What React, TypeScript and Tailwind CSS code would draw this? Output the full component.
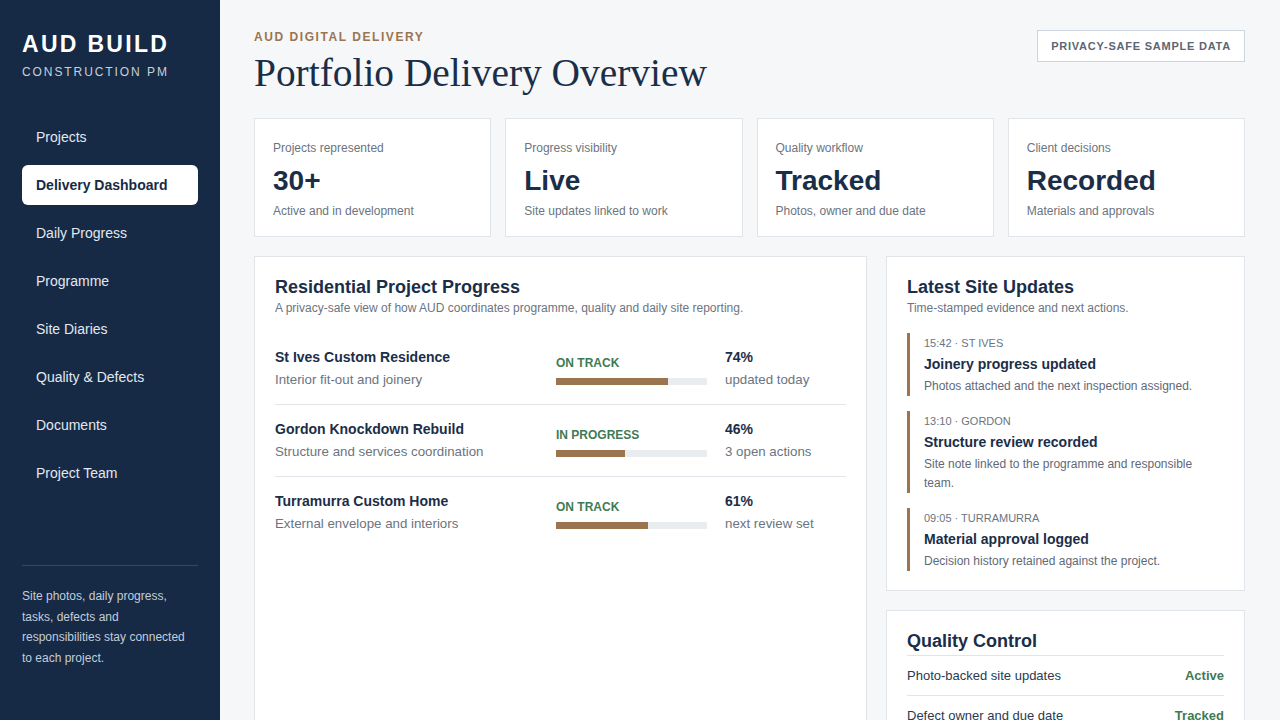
import React from 'react';

const navItems = [
  'Projects',
  'Delivery Dashboard',
  'Daily Progress',
  'Programme',
  'Site Diaries',
  'Quality & Defects',
  'Documents',
  'Project Team',
];

const stats = [
  { label: 'Projects represented', value: '30+', sub: 'Active and in development' },
  { label: 'Progress visibility', value: 'Live', sub: 'Site updates linked to work' },
  { label: 'Quality workflow', value: 'Tracked', sub: 'Photos, owner and due date' },
  { label: 'Client decisions', value: 'Recorded', sub: 'Materials and approvals' },
];

const projects = [
  { name: 'St Ives Custom Residence', scope: 'Interior fit-out and joinery', status: 'ON TRACK', pct: 74, note: 'updated today' },
  { name: 'Gordon Knockdown Rebuild', scope: 'Structure and services coordination', status: 'IN PROGRESS', pct: 46, note: '3 open actions' },
  { name: 'Turramurra Custom Home', scope: 'External envelope and interiors', status: 'ON TRACK', pct: 61, note: 'next review set' },
];

const updates = [
  { meta: '15:42 · ST IVES', title: 'Joinery progress updated', text: 'Photos attached and the next inspection assigned.' },
  { meta: '13:10 · GORDON', title: 'Structure review recorded', text: 'Site note linked to the programme and responsible team.' },
  { meta: '09:05 · TURRAMURRA', title: 'Material approval logged', text: 'Decision history retained against the project.' },
];

const quality = [
  { label: 'Photo-backed site updates', value: 'Active' },
  { label: 'Defect owner and due date', value: 'Tracked' },
  { label: 'Inspection sign-off', value: 'Recorded' },
];

const Sidebar = () => (
  <aside className="w-[220px] shrink-0 h-screen sticky top-0 bg-[#162a45] flex flex-col px-[22px] pt-[31px] pb-[52px]">
    <div className="text-[23px] leading-[26px] font-bold tracking-[0.1em] text-white">AUD BUILD</div>
    <div className="mt-[7px] text-[12px] leading-4 tracking-[0.16em] text-[#c7d0dc]">CONSTRUCTION PM</div>

    <nav className="mt-[37px] flex flex-col gap-2">
      {navItems.map((item) => (
        <div
          key={item}
          className={`h-10 flex items-center px-[14px] rounded-md text-[14px] ${
            item === 'Delivery Dashboard' ? 'bg-white text-[#162a45] font-bold' : 'text-[#e3e8ef]'
          }`}
        >
          {item}
        </div>
      ))}
    </nav>

    <div className="mt-auto border-t border-[#34476a] pt-[20px] text-[12px] leading-[20.5px] text-[#c3cddb]">
      Site photos, daily progress, tasks, defects and responsibilities stay connected to each project.
    </div>
  </aside>
);

const App = () => {
  return (
    <div className="flex min-h-screen bg-[#f5f7f9] font-['Liberation_Sans',Arial,sans-serif] text-[#1b2e48]">
      <Sidebar />

      <main className="flex-1 min-w-0 pl-[34px] pr-[35px] pt-[29px]">
        {/* Header */}
        <div className="flex justify-between items-start">
          <div>
            <div className="text-[12px] leading-4 font-bold tracking-[0.13em] text-[#9b7450]">AUD DIGITAL DELIVERY</div>
            <h1 className="mt-[5px] font-['Liberation_Serif',Georgia,serif] text-[39.4px] leading-[46px] text-[#1b2e48]">
              Portfolio Delivery Overview
            </h1>
          </div>
          <div className="mt-[1px] h-8 px-[13px] flex items-center bg-white border border-[#cfd5dc] text-[11px] font-bold tracking-[0.07em] text-[#5b6675]">
            PRIVACY-SAFE SAMPLE DATA
          </div>
        </div>

        {/* Stats */}
        <div className="mt-[22px] grid grid-cols-4 gap-[14px]">
          {stats.map((s) => (
            <div key={s.label} className="bg-white border border-[#e1e5ea] px-[18px] pt-[21px] pb-[17px]">
              <div className="text-[12px] leading-4 text-[#6b7480]">{s.label}</div>
              <div className="mt-2 text-[28px] leading-[34px] font-bold text-[#1b2e48]">{s.value}</div>
              <div className="mt-[5px] text-[12px] leading-4 text-[#6b7480]">{s.sub}</div>
            </div>
          ))}
        </div>

        {/* Lower */}
        <div className="mt-[19px] grid grid-cols-[minmax(0,1fr)_359px] gap-[19px] pb-8">
          <section className="bg-white border border-[#e1e5ea] px-5 pt-[18px]">
            <h2 className="text-[18px] leading-6 font-bold">Residential Project Progress</h2>
            <p className="mt-[1px] text-[12px] leading-4 text-[#6b7480]">
              A privacy-safe view of how AUD coordinates programme, quality and daily site reporting.
            </p>
            <div className="mt-[17px]">
              {projects.map((p, i) => (
                <div
                  key={p.name}
                  className={`grid grid-cols-[minmax(0,1fr)_151px_121px] gap-[18px] pt-[16px] pb-[14px] ${
                    i < projects.length - 1 ? 'border-b border-[#e1e5ea]' : ''
                  }`}
                >
                  <div>
                    <div className="text-[14px] leading-[17px] font-bold">{p.name}</div>
                    <div className="mt-1 text-[13.3px] leading-5 text-[#6b7480]">{p.scope}</div>
                  </div>
                  <div className="pt-[6px]">
                    <div className="text-[12px] leading-4 font-bold text-[#3f7a55]">{p.status}</div>
                    <div className="mt-[7px] h-[7px] bg-[#e9edf0]">
                      <div className="h-full bg-[#9b7450]" style={{ width: `${p.pct}%` }} />
                    </div>
                  </div>
                  <div>
                    <div className="text-[14px] leading-[17px] font-bold">{p.pct}%</div>
                    <div className="mt-1 text-[13.3px] leading-5 text-[#6b7480]">{p.note}</div>
                  </div>
                </div>
              ))}
            </div>
          </section>

          <div className="flex flex-col gap-[19px]">
            <section className="bg-white border border-[#e1e5ea] px-5 pt-[18px] pb-[19px]">
              <h2 className="text-[18px] leading-6 font-bold">Latest Site Updates</h2>
              <p className="mt-[1px] text-[12px] leading-4 text-[#6b7480]">Time-stamped evidence and next actions.</p>
              <div className="mt-[17px] flex flex-col gap-[15px]">
                {updates.map((u) => (
                  <div key={u.title} className="border-l-[3px] border-[#9b7450] pl-[14px] pt-[2px]">
                    <div className="text-[11px] leading-4 text-[#6b7480]">{u.meta}</div>
                    <div className="mt-1 text-[14px] leading-[18px] font-bold">{u.title}</div>
                    <div className="mt-1 text-[12px] leading-[19px] text-[#5f6977]">{u.text}</div>
                  </div>
                ))}
              </div>
            </section>

            <section className="bg-white border border-[#e1e5ea] px-5 pt-[18px] pb-3">
              <h2 className="text-[18px] leading-6 font-bold pb-[2px] border-b border-[#e1e5ea]">Quality Control</h2>
              {quality.map((q, i) => (
                <div
                  key={q.label}
                  className={`h-10 flex items-center justify-between text-[13px] ${
                    i < quality.length - 1 ? 'border-b border-[#e1e5ea]' : ''
                  }`}
                >
                  <span className="text-[#2a3a50]">{q.label}</span>
                  <span className="font-bold text-[#3f7a55]">{q.value}</span>
                </div>
              ))}
            </section>
          </div>
        </div>
      </main>
    </div>
  );
};

export default App;
